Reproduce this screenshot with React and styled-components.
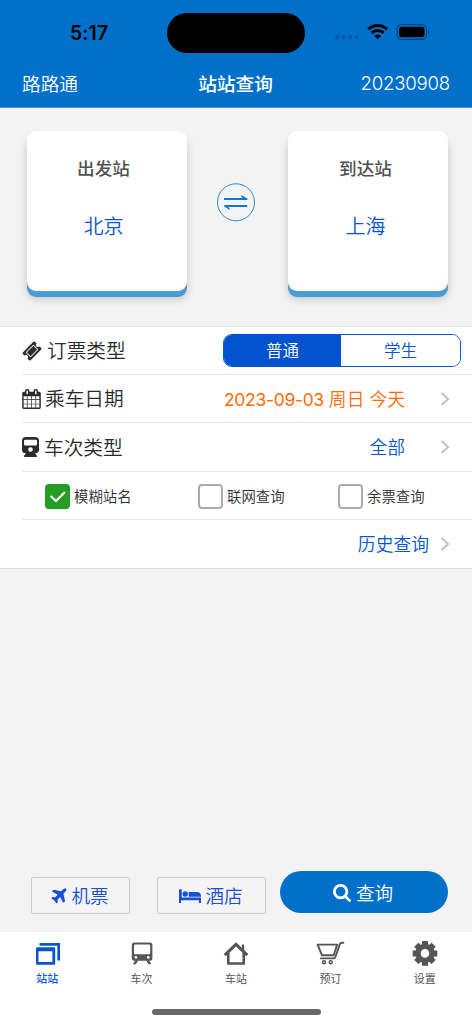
import React, { useState } from "react";
import styled, { createGlobalStyle } from "styled-components";

const GlobalStyle = createGlobalStyle`
  * { box-sizing: border-box; }
  body {
    margin: 0;
    background: #f3f3f3;
    font-family: Inter, "Noto Sans CJK SC", sans-serif;
  }
  button { font-family: inherit; padding: 0; cursor: pointer; }
`;

const Screen = styled.div`
  width: 472px;
  height: 1024px;
  display: flex;
  flex-direction: column;
  overflow: hidden;
  background: #f3f3f3;
`;

const Header = styled.header`
  height: 108px;
  background: #0070cb;
  border-bottom: 1px solid #4b93d4;
  flex: none;
`;

const StatusBar = styled.div`
  height: 66px;
  display: grid;
  grid-template-columns: 167px 138px 167px;
`;

const Clock = styled.div`
  padding: 20px 0 0 70px;
  font: 600 19.4px/26px Inter, sans-serif;
  letter-spacing: 0.1px;
  color: #000;
`;

const Island = styled.div`
  margin-top: 13px;
  height: 40px;
  border-radius: 20px;
  background: #000;
`;

const StatusIcons = styled.svg`
  margin: 20px 0 0 29px;
  width: 104px;
  height: 24px;
`;

const NavBar = styled.div`
  display: grid;
  grid-template-columns: 1fr auto 1fr;
  align-items: center;
  height: 33px;
  padding: 0 22px;
  color: #fff;
  font-size: 18.7px;
`;

const NavTitle = styled.h1`
  margin: 0 1px 0 0;
  font-size: 18.7px;
  font-weight: 500;
`;

const NavDate = styled.span`
  text-align: right;
  font-weight: 350;
  font-size: 18.6px;
  letter-spacing: -0.2px;
`;

const NavBrand = styled.span`
  font-weight: 350;
`;

const Stations = styled.section`
  flex: none;
  height: 218px;
  padding: 23px 24px 0 27px;
  display: flex;
  justify-content: space-between;
`;

const StationCard = styled.button`
  width: 160px;
  height: 160px;
  border: 0;
  border-radius: 9px;
  background: #fff;
  box-shadow: 0 6px 0 #4a9dd4, 0 8px 8px rgba(0, 0, 0, 0.2);
  display: flex;
  flex-direction: column;
  align-items: center;
  padding: 24px ${(p) => p.$inset}px 0 0;
`;

const StationLabel = styled.span`
  font-size: 17.6px;
  line-height: 28px;
  font-weight: 500;
  color: #505050;
`;

const StationName = styled.span`
  margin-top: 29px;
  font-size: 20px;
  line-height: 30px;
  font-weight: 350;
  color: #0654d0;
`;

const SwapButton = styled.button`
  width: 38px;
  height: 39px;
  margin: 52px 4px 0 0;
  border: 0;
  background: none;
  svg { display: block; }
`;

const Form = styled.section`
  flex: none;
  height: 243px;
  background: #fff;
  border-top: 1px solid #e3e3e3;
  border-bottom: 1px solid #dedede;
`;

const Row = styled.div`
  height: ${(p) => p.$h || 48}px;
  margin-left: 22px;
  padding-right: ${(p) => p.$right ?? 22}px;
  display: flex;
  align-items: center;
  border-bottom: ${(p) => (p.$last ? 0 : 1)}px solid #e6e6e6;
`;

const RowIcon = styled.svg`
  flex: none;
  width: ${(p) => p.$w}px;
  height: 20px;
  margin-right: ${(p) => p.$gap}px;
  fill: #2b2b2b;
`;

const RowTitle = styled.span`
  flex: 1;
  padding-top: 1px;
  font-size: 19.7px;
  line-height: 28px;
  font-weight: 350;
  color: #2a2a2a;
`;

const RowValue = styled.span`
  margin-left: auto;
  padding-top: 2px;
  font-size: 17.8px;
  font-weight: 350;
  line-height: 26px;
  white-space: pre;
  color: ${(p) => (p.$warm ? "#ff6b08" : "#0654d0")};
`;

const DateDigits = styled.span`
  font-size: 17.5px;
  font-weight: 400;
  letter-spacing: -0.32px;
`;

const Chevron = styled.svg`
  flex: none;
  width: 10px;
  height: 14px;
  margin-left: ${(p) => p.$gap || 35}px;
  fill: none;
  stroke: #c4c4c4;
  stroke-width: 2.3;
`;

const Segmented = styled.div`
  width: 238px;
  height: 33px;
  display: grid;
  grid-template-columns: 117px 1fr;
  border: 1px solid #0654d0;
  border-radius: 9px;
  overflow: hidden;
`;

const Segment = styled.button`
  border: 0;
  padding-top: 1px;
  font-size: 16.5px;
  line-height: 24px;
  font-weight: 350;
  background: ${(p) => (p.$on ? "#0152ce" : "#fff")};
  color: ${(p) => (p.$on ? "#fff" : "#0654d0")};
`;

const CheckRow = styled(Row)`
  padding-left: 23px;
  display: grid;
  grid-template-columns: 153px 140px 1fr;
`;

const CheckItem = styled.button`
  display: flex;
  align-items: center;
  gap: 4px;
  padding-top: 2px;
  border: 0;
  background: none;
  font-size: 14.4px;
  line-height: 22px;
  font-weight: 350;
  color: #2c2c2c;
`;

const CheckText = styled.span`
  padding-top: 1px;
`;

const Box = styled.span`
  width: 25px;
  height: 25px;
  border-radius: 4px;
  border: 2px solid ${(p) => (p.$on ? "#249c25" : "#ababab")};
  background: ${(p) => (p.$on ? "#249c25" : "#fff")};
  svg { display: block; }
`;

const Actions = styled.section`
  margin-top: auto;
  height: 61px;
  flex: none;
  display: flex;
  align-items: flex-start;
  padding-left: 31px;
`;

const LinkButton = styled.button`
  width: ${(p) => p.$w}px;
  height: 37px;
  margin: 6px ${(p) => p.$gap}px 0 0;
  padding-right: 1px;
  display: flex;
  align-items: center;
  justify-content: center;
  gap: 4px;
  border: 1px solid #ccc;
  border-radius: 2px;
  background: #f4f4f4;
  color: #174fd9;
  font-size: 18.6px;
  line-height: 28px;
  font-weight: 350;
  svg { fill: currentColor; }
`;

const SearchButton = styled.button`
  width: 168px;
  height: 42px;
  display: flex;
  align-items: center;
  justify-content: center;
  gap: 5px;
  border: 0;
  border-radius: 21px;
  background: #0070cb;
  color: #fff;
  font-size: 18.6px;
  line-height: 28px;
  font-weight: 350;
  padding: 1px 2px 0 0;
  svg { fill: currentColor; }
`;

const TabBar = styled.nav`
  flex: none;
  height: 92px;
  background: #fff;
  display: grid;
  grid-template: 77px 15px / repeat(5, 1fr);
`;

const Tab = styled.button`
  border: 0;
  background: none;
  display: flex;
  flex-direction: column;
  align-items: center;
  padding-top: 8px;
  font-size: 11px;
  line-height: 16px;
  font-weight: ${(p) => (p.$on ? 500 : 400)};
  color: ${(p) => (p.$on ? "#0654d0" : "#555")};
  svg { width: 30px; height: 28px; margin-bottom: 3px; }
`;

const HomeIndicator = styled.div`
  grid-column: 1 / -1;
  justify-self: center;
  width: 169px;
  height: 6px;
  border-radius: 3px;
  background: #686868;
`;

const paths = {
  ticketPanel: "M1024 452l316 316-572 572-316-316z",
  ticket:
    "M813 1431l618-618q19-19 19-45t-19-45l-362-362q-18-18-45-18t-45 18l-618 618q-19 19-19 45t19 45l362 362q18 18 45 18t45-18zm889-637l-907 908q-37 37-90.5 37t-90.5-37l-126-126q56-56 56-136t-56-136-136-56-136 56l-125-126q-37-37-37-90.5t37-90.5l907-906q37-37 90.5-37t90.5 37l125 125q-56 56-56 136t56 136 136 56 136-56l126 125q37 37 37 90.5t-37 90.5z",
  calendar:
    "M192 1664h288v-288h-288v288zm352 0h320v-288h-320v288zm-352-352h288v-320h-288v320zm352 0h320v-320h-320v320zm-352-384h288v-288h-288v288zm736 736h320v-288h-320v288zm-384-736h320v-288h-320v288zm768 736h288v-288h-288v288zm-384-352h320v-320h-320v320zm-352-864v-288q0-13-9.5-22.5t-22.5-9.5h-64q-13 0-22.5 9.5t-9.5 22.5v288q0 13 9.5 22.5t22.5 9.5h64q13 0 22.5-9.5t9.5-22.5zm736 864h288v-320h-288v320zm-384-384h320v-288h-320v288zm384 0h288v-288h-288v288zm32-480v-288q0-13-9.5-22.5t-22.5-9.5h-64q-13 0-22.5 9.5t-9.5 22.5v288q0 13 9.5 22.5t22.5 9.5h64q13 0 22.5-9.5t9.5-22.5zm384-64v1280q0 52-38 90t-90 38h-1408q-52 0-90-38t-38-90v-1280q0-52 38-90t90-38h128v-96q0-66 47-113t113-47h64q66 0 113 47t47 113v96h384v-96q0-66 47-113t113-47h64q66 0 113 47t47 113v96h128q52 0 90 38t38 90z",
  plane:
    "M1568 160q44 52 12 148t-108 172l-161 161 160 696q5 19-12 33l-128 96q-7 6-19 6-4 0-7-1-15-3-21-16l-279-508-259 259 53 194q5 17-8 31l-96 96q-9 9-23 9h-2q-15-2-24-13l-189-252-252-189q-11-7-13-23-1-13 9-25l96-97q9-9 23-9 6 0 8 1l194 53 259-259-508-279q-14-8-17-24-2-16 9-27l128-128q14-13 30-8l665 159 160-160q76-76 172-108t148 12z",
  bed: "M256 1024h1728q26 0 45 19t19 45v448h-192v-256h-1664v256h-192v-1216q0-26 19-45t45-19h128q26 0 45 19t19 45v704zm576-320q0-106-75-181t-181-75-181 75-75 181 75 181 181 75 181-75 75-181zm1216 256v-64q0-159-112.5-271.5t-271.5-112.5h-704q-26 0-45 19t-19 45v384h1152z",
  search:
    "M1216 832q0-185-131.5-316.5t-316.5-131.5-316.5 131.5-131.5 316.5 131.5 316.5 316.5 131.5 316.5-131.5 131.5-316.5zm512 832q0 52-38 90t-90 38q-54 0-90-38l-343-342q-179 124-399 124-143 0-273.5-55.5t-225-150-150-225-55.5-273.5 55.5-273.5 150-225 225-150 273.5-55.5 273.5 55.5 225 150 150 225 55.5 273.5q0 220-124 399l343 343q37 37 37 90z",
};

const ChevronRight = ({ gap }) => (
  <Chevron $gap={gap} viewBox="0 0 10 14">
    <path d="M1.5 1 8 7 1.5 13" />
  </Chevron>
);

const tabs = [
  {
    label: "站站",
    icon: (
      <svg viewBox="0 0 30 28">
        <path d="M7.5 4.3h19.200v16.200" fill="none" stroke="currentColor" strokeWidth="2.7" />
        <path fillRule="evenodd" fill="currentColor" d="M5 7.300h17.200a1 1 0 0 1 1 1v15.400a1 1 0 0 1-1 1H5a1 1 0 0 1-1-1V8.300a1 1 0 0 1 1-1Zm1.500 4v10.600h13.900V11.300Z" />
      </svg>
    ),
  },
  {
    label: "车次",
    icon: (
      <svg viewBox="0 0 30 28" fill="currentColor">
        <path fillRule="evenodd" d="M7.600 2.600h15q2.800 0 2.800 2.800v13q0 2-2 2.400H6.800q-2-.4-2-2.400v-13q0-2.800 2.800-2.800Zm.6 2q-1.200 0-1.200 1.200v7.400q0 1 1 1h14.200q1 0 1-1V5.800q0-1.200-1.200-1.200ZM8.900 15.900a1.400 1.400 0 1 0 .01 0ZM21.300 15.900a1.400 1.400 0 1 0 .01 0Z" />
        <path d="M8.300 20.200h3l-2.400 4H5.900ZM19 20.200h3l2.400 4h-3Z" />
      </svg>
    ),
  },
  {
    label: "车站",
    icon: (
      <svg viewBox="0 0 30 28" fill="none" stroke="currentColor">
        <path d="m3.700 15.200 11.300-10.900 11.300 10.900" strokeWidth="3" />
        <path d="M7.300 12.500v11h15.400v-11" strokeWidth="2.600" />
        <path d="M22 4.500v6" strokeWidth="2.400" />
      </svg>
    ),
  },
  {
    label: "预订",
    icon: (
      <svg viewBox="0 0 30 28" fill="none" stroke="currentColor" strokeWidth="1.900" strokeLinejoin="round" strokeLinecap="round">
        <path d="M2.600 4.600h19.600l-3.600 10.700H7Z" />
        <path d="M28.400 2.800h-1.500q-1.500 0-2 1.300l-4.600 13q-.6 1.300-2 1.300H6" />
        <circle cx="9" cy="22.300" r="1.500" strokeWidth="1.500" />
        <circle cx="15.700" cy="22.300" r="1.500" strokeWidth="1.500" />
      </svg>
    ),
  },
  {
    label: "设置",
    icon: (
      <svg viewBox="0 0 30 28">
        <g transform="translate(15 13.400)" fill="currentColor">
          {[0, 45, 90, 135, 180, 225, 270, 315].map((a) => (
            <rect key={a} x="-3" y="-12.300" width="6" height="5" rx="0.500" transform={`rotate(${a})`} />
          ))}
          <circle r="7" fill="none" stroke="currentColor" strokeWidth="5.400" />
        </g>
      </svg>
    ),
  },
];

export default function App() {
  const [kind, setKind] = useState(0);
  const [tab, setTab] = useState(0);
  const [checks, setChecks] = useState([true, false, false]);

  return (
    <Screen>
      <GlobalStyle />
      <Header>
        <StatusBar>
          <Clock>5:17</Clock>
          <Island />
          <StatusIcons viewBox="0 0 104 24">
            <g fill="#0059a4">
              <circle cx="3.200" cy="17.400" r="2.100" />
              <circle cx="9.600" cy="17.400" r="2.100" />
              <circle cx="16.200" cy="17.400" r="2.100" />
              <circle cx="22.700" cy="17.400" r="2.100" />
            </g>
            <g fill="none" stroke="#000" strokeWidth="2.900">
              <path d="M34.300 9.300a13.400 13.400 0 0 1 18.800 0" />
              <path d="M37.700 12.900a8.600 8.600 0 0 1 12 0" />
            </g>
            <path d="m43.700 19.300-3.400-3.500a4.900 4.900 0 0 1 6.800 0Z" />
            <rect x="63" y="4.600" width="29.600" height="14.800" rx="4.600" fill="none" stroke="#00447c" strokeWidth="1.200" />
            <rect x="65" y="6.700" width="25.600" height="10.600" rx="3" />
            <path d="M94.200 9.700q1.600.6 1.600 2.300t-1.600 2.300Z" fill="#00447c" />
          </StatusIcons>
        </StatusBar>
        <NavBar>
          <NavBrand>路路通</NavBrand>
          <NavTitle>站站查询</NavTitle>
          <NavDate>20230908</NavDate>
        </NavBar>
      </Header>

      <Stations>
        <StationCard $inset={7}>
          <StationLabel>出发站</StationLabel>
          <StationName>北京</StationName>
        </StationCard>
        <SwapButton aria-label="swap">
          <svg width="38" height="39" viewBox="0 0 38 39">
            <circle cx="19" cy="19.300" r="18.500" fill="none" stroke="#2f8ad3" />
            <path fill="#0f79cf" d="M7 15h18.500l-2-2.600 2 .4 4.900 2.600v1.600H7ZM30.200 22h-23v1.600l4.800 2.900 1.300.2-1.800-2.700h18.700Z" />
          </svg>
        </SwapButton>
        <StationCard $inset={5}>
          <StationLabel>到达站</StationLabel>
          <StationName>上海</StationName>
        </StationCard>
      </Stations>

      <Form>
        <Row $right={11}>
          <RowIcon $w={20} $gap={5} viewBox="0 0 1792 1792">
            <path d={paths.ticketPanel} stroke="#2b2b2b" strokeWidth="50" />
            <path d={paths.ticket} />
          </RowIcon>
          <RowTitle>订票类型</RowTitle>
          <Segmented>
            {["普通", "学生"].map((t, i) => (
              <Segment key={t} $on={kind === i} onClick={() => setKind(i)}>{t}</Segment>
            ))}
          </Segmented>
        </Row>
        <Row>
          <RowIcon $w={19} $gap={4} viewBox="64 0 1664 1792"><path d={paths.calendar} /></RowIcon>
          <RowTitle>乘车日期</RowTitle>
          <RowValue $warm><DateDigits>2023-09-03</DateDigits> 周日 今天</RowValue>
          <ChevronRight />
        </Row>
        <Row $h={49}>
          <RowIcon $w={17} $gap={5} viewBox="0 0 17 20">
            <path fillRule="evenodd" d="M4 0h9q4 0 4 3.500V13q0 3-4 3.500l1.800 2V20H2.200v-1.500L4 16.500Q0 16 0 13V3.500Q0 0 4 0Zm-.7 2.800q-1.300 0-1.300 1.200v3.300q0 1.200 1.300 1.200h10.400q1.300 0 1.300-1.200V4q0-1.200-1.300-1.200ZM8.500 10.200a2.300 2.300 0 1 0 .01 0Z" />
          </RowIcon>
          <RowTitle>车次类型</RowTitle>
          <RowValue>全部</RowValue>
          <ChevronRight />
        </Row>
        <CheckRow>
          {["模糊站名", "联网查询", "余票查询"].map((t, i) => (
            <CheckItem key={t} onClick={() => setChecks(checks.map((c, j) => (j === i ? !c : c)))}>
              <Box $on={checks[i]}>
                {checks[i] && (
                  <svg width="21" height="21" viewBox="0 0 21 21">
                    <path d="m3.600 10 5.400 5L18 6" fill="none" stroke="#fff" strokeWidth="2.200" />
                  </svg>
                )}
              </Box>
              <CheckText>{t}</CheckText>
            </CheckItem>
          ))}
        </CheckRow>
        <Row $last>
          <RowValue>历史查询</RowValue>
          <ChevronRight gap={11} />
        </Row>
      </Form>

      <Actions>
        <LinkButton $w={99} $gap={27}>
          <svg width="16" height="16" viewBox="150 100 1500 1500"><path d={paths.plane} /></svg>
          机票
        </LinkButton>
        <LinkButton $w={109} $gap={14}>
          <svg width="22" height="14" viewBox="0 256 2048 1280"><path d={paths.bed} /></svg>
          酒店
        </LinkButton>
        <SearchButton>
          <svg width="18" height="18" viewBox="64 128 1664 1664"><path d={paths.search} /></svg>
          查询
        </SearchButton>
      </Actions>

      <TabBar>
        {tabs.map((t, i) => (
          <Tab key={t.label} $on={tab === i} onClick={() => setTab(i)}>
            {t.icon}
            {t.label}
          </Tab>
        ))}
        <HomeIndicator />
      </TabBar>
    </Screen>
  );
}
